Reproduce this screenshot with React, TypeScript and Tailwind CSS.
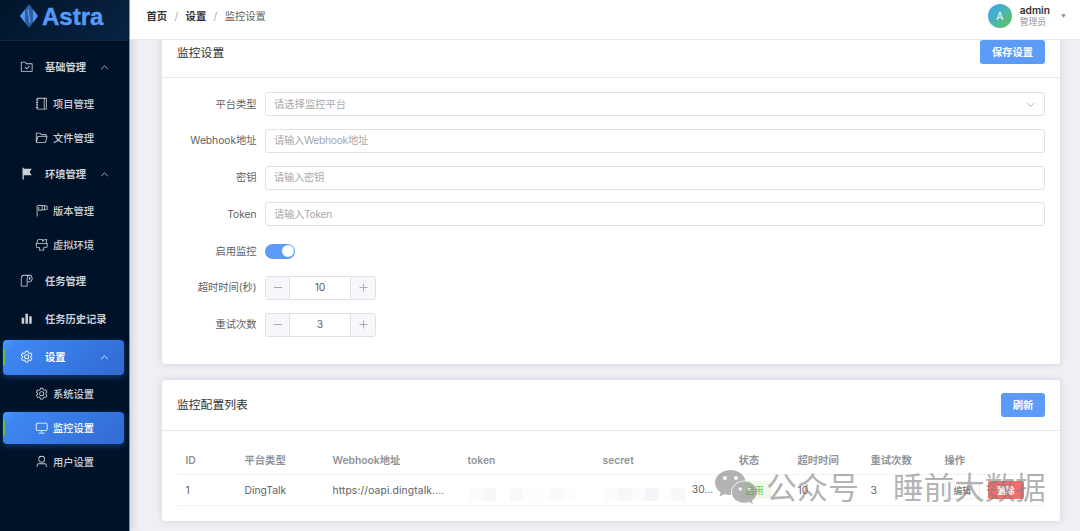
import React from "react";

const icons: Record<string, string> = {
  folderChecked:
    "M128 192v640h768V320H485.76L357.504 192zm-32-64h287.872l128.384 128H928a32 32 0 0 1 32 32v576a32 32 0 0 1-32 32H96a32 32 0 0 1-32-32V160a32 32 0 0 1 32-32m414.08 502.144 180.992-180.992L736.32 494.4 510.08 720.64l-158.4-158.336 45.248-45.312z",
  notebook:
    "M192 128v768h640V128zm-32-64h704a32 32 0 0 1 32 32v832a32 32 0 0 1-32 32H160a32 32 0 0 1-32-32V96a32 32 0 0 1 32-32M672 128h64v768h-64zM96 192h128q32 0 32 32t-32 32H96q-32 0-32-32t32-32m0 192h128q32 0 32 32t-32 32H96q-32 0-32-32t32-32m0 192h128q32 0 32 32t-32 32H96q-32 0-32-32t32-32m0 192h128q32 0 32 32t-32 32H96q-32 0-32-32t32-32",
  folderOpened:
    "M878.08 448H241.92l-96 384h636.16zM832 384v-64H485.76L357.504 192H128v448l57.92-231.744A32 32 0 0 1 216.96 384zm-24.96 512H96a32 32 0 0 1-32-32V160a32 32 0 0 1 32-32h287.872l128.384 128H864a32 32 0 0 1 32 32v96h23.04a32 32 0 0 1 31.04 39.744l-112 448A32 32 0 0 1 807.04 896",
  flag: "M288 128h608L736 384l160 256H288v320h-96V64h96z",
  wind: "M160 64q32 0 32 32v832q0 32-32 32t-32-32V96q0-32 32-32m416 354.624 128-11.584V168.96l-128-11.52zm-64 5.824V151.552L320 134.08V160h-64V64l616.704 56.064A96 96 0 0 1 960 215.68v144.64a96 96 0 0 1-87.296 95.616L256 512V224h64v217.92zm256-23.232 98.88-8.96A32 32 0 0 0 896 360.32V215.68a32 32 0 0 0-29.12-31.872l-98.88-8.96z",
  brush:
    "M896 448H128v192a64 64 0 0 0 64 64h192v192h256V704h192a64 64 0 0 0 64-64zm-770.752-64c0-47.552 5.248-90.24 15.552-128 14.72-54.016 42.496-107.392 83.2-160h417.28l-15.36 70.336L736 96h211.2c-24.832 42.88-41.92 96.256-51.2 160a663.872 663.872 0 0 0-6.144 128H960v256a128 128 0 0 1-128 128H704v160a32 32 0 0 1-32 32H352a32 32 0 0 1-32-32V768H192A128 128 0 0 1 64 640V384zm64 0h636.544c-2.048-45.824.256-91.584 6.848-137.216 4.48-30.848 10.688-59.776 18.688-86.784h-96.64l-221.12 141.248L561.92 160H256.512c-25.856 37.888-43.776 75.456-53.952 112.832-8.768 32.064-13.248 69.12-13.312 111.168z",
  paper:
    "M595.2 128H320a192 192 0 0 0-192 192v576h384V352c0-90.496 32.448-171.2 83.2-224M736 64c123.712 0 224 128.96 224 288S859.712 640 736 640H576v320H64V320A256 256 0 0 1 320 64zM576 352v224h160c84.352 0 160-97.28 160-224s-75.648-224-160-224-160 97.28-160 224M736 448c-35.328 0-64-43.008-64-96s28.672-96 64-96 64 43.008 64 96-28.672 96-64 96",
  histogram: "M416 896V128h192v768zm-288 0V448h192v448zm576 0V320h192v576z",
  setting:
    "M600.704 64a32 32 0 0 1 30.464 22.208l35.2 109.376c14.784 7.232 28.928 15.36 42.432 24.512l112.384-24.192a32 32 0 0 1 34.432 15.36L944.32 364.8a32 32 0 0 1-4.032 37.504l-77.12 85.12a357.12 357.12 0 0 1 0 49.024l77.12 85.248a32 32 0 0 1 4.032 37.504l-88.704 153.6a32 32 0 0 1-34.432 15.296L708.8 803.904c-13.44 9.088-27.648 17.28-42.368 24.512l-35.264 109.376A32 32 0 0 1 600.704 960H423.296a32 32 0 0 1-30.464-22.208L357.696 828.48a351.616 351.616 0 0 1-42.56-24.64l-112.32 24.256a32 32 0 0 1-34.432-15.36L79.68 659.2a32 32 0 0 1 4.032-37.504l77.12-85.248a357.12 357.12 0 0 1 0-48.896l-77.12-85.248A32 32 0 0 1 79.68 364.8l88.704-153.6a32 32 0 0 1 34.432-15.296l112.32 24.256c13.568-9.152 27.776-17.408 42.56-24.64l35.2-109.312A32 32 0 0 1 423.232 64H600.64zm-23.424 64H446.72l-36.352 113.088-24.512 11.968a294.113 294.113 0 0 0-34.816 20.096l-22.656 15.36-116.224-25.088-65.28 113.152 79.68 88.192-1.92 27.136a293.12 293.12 0 0 0 0 40.192l1.92 27.136-79.808 88.192 65.344 113.152 116.224-25.024 22.656 15.296a294.113 294.113 0 0 0 34.816 20.096l24.512 11.968L446.72 896h130.688l36.48-113.152 24.448-11.904a288.282 288.282 0 0 0 34.752-20.096l22.592-15.296 116.288 25.024 65.28-113.152-79.744-88.192 1.92-27.136a293.12 293.12 0 0 0 0-40.256l-1.92-27.136 79.808-88.128-65.344-113.152-116.288 24.96-22.592-15.232a287.616 287.616 0 0 0-34.752-20.096l-24.448-11.904L577.344 128zM512 320a192 192 0 1 1 0 384 192 192 0 0 1 0-384m0 64a128 128 0 1 0 0 256 128 128 0 0 0 0-256",
  monitor:
    "M544 768v128h192a32 32 0 1 1 0 64H288a32 32 0 1 1 0-64h192V768H192A128 128 0 0 1 64 640V256a128 128 0 0 1 128-128h640a128 128 0 0 1 128 128v384a128 128 0 0 1-128 128zM192 192a64 64 0 0 0-64 64v384a64 64 0 0 0 64 64h640a64 64 0 0 0 64-64V256a64 64 0 0 0-64-64z",
  user: "M512 512a192 192 0 1 0 0-384 192 192 0 0 0 0 384m0 64a256 256 0 1 1 0-512 256 256 0 0 1 0 512m320 320v-96a96 96 0 0 0-96-96H288a96 96 0 0 0-96 96v96a32 32 0 1 1-64 0v-96a160 160 0 0 1 160-160h448a160 160 0 0 1 160 160v96a32 32 0 1 1-64 0",
};

function Icon({ name }: { name: string }) {
  return (
    <svg viewBox="0 0 1024 1024" className="size-[13.4px] shrink-0 fill-current">
      <path d={icons[name]} />
    </svg>
  );
}

function Chevron({ up = false, className = "" }: { up?: boolean; className?: string }) {
  return (
    <svg viewBox="0 0 10 10" className={`size-[9px] shrink-0 fill-none stroke-current ${className}`} strokeWidth="0.9">
      <path d={up ? "M1.3 6.8 5 3.2l3.7 3.6" : "M1 3.2 5 7.2l4-4"} />
    </svg>
  );
}

type Item = { label: string; icon: string; sub?: boolean; open?: boolean; active?: boolean; box: string };

const items: Item[] = [
  { label: "基础管理", icon: "folderChecked", open: true, box: "h-[35px] mt-[9px]" },
  { label: "项目管理", icon: "notebook", sub: true, box: "h-[32px] mt-[3px]" },
  { label: "文件管理", icon: "folderOpened", sub: true, box: "h-[32px] mt-[2px]" },
  { label: "环境管理", icon: "flag", open: true, box: "h-[35px] mt-[3px]" },
  { label: "版本管理", icon: "wind", sub: true, box: "h-[32px] mt-[3px]" },
  { label: "虚拟环境", icon: "brush", sub: true, box: "h-[32px] mt-[2px]" },
  { label: "任务管理", icon: "paper", box: "h-[35px] mt-[3px]" },
  { label: "任务历史记录", icon: "histogram", box: "h-[35px] mt-[3px]" },
  { label: "设置", icon: "setting", open: true, active: true, box: "h-[35px] mt-[3px]" },
  { label: "系统设置", icon: "setting", sub: true, box: "h-[32px] mt-[3px]" },
  { label: "监控设置", icon: "monitor", sub: true, active: true, box: "h-[32px] mt-[2px]" },
  { label: "用户设置", icon: "user", sub: true, box: "h-[32px] mt-[2px]" },
];

function MenuItem({ item }: { item: Item }) {
  return (
    <div
      className={`relative ml-[3px] flex w-[120.5px] shrink-0 items-center rounded-[4px] ${item.box} ${
        item.sub ? "gap-[5px] pl-[31.5px] pt-[1px] font-medium" : "gap-[11.5px] pl-[17px] font-bold"
      } ${
        item.active
          ? "bg-linear-135 from-[#409eff] from-0% via-[#3f87f3] via-10% to-[#316ad2] text-white shadow-[0_2px_6px_rgba(64,138,255,0.35)]"
          : "text-[#cbd0d7]"
      }`}
    >
      {item.active && <span className="absolute left-0 h-[16px] w-[2px] rounded-r-[1px] bg-[#67c23a]" />}
      <Icon name={item.icon} />
      <span>{item.label}</span>
      {item.open && <Chevron up className="ml-auto mr-[15px]" />}
    </div>
  );
}

function Row({ label, children }: { label: string; children: React.ReactNode }) {
  return (
    <div className="mb-[12.8px] flex h-[24px] items-center">
      <div className="w-[79.5px] shrink-0 whitespace-nowrap text-right tracking-[-0.05px]">{label}</div>
      <div className="ml-[8.5px] flex flex-1 items-center">{children}</div>
    </div>
  );
}

function Input({ placeholder, select = false }: { placeholder: string; select?: boolean }) {
  return (
    <div className="flex h-[24px] flex-1 items-center justify-between rounded-[3px] border border-[#dfe1e7] pl-[8px] pr-[9px] text-[#a5a8af]">
      <span className={select ? "" : "tracking-[-0.3px]"}>{placeholder}</span>
      {select && <Chevron />}
    </div>
  );
}

function Stepper({ value }: { value: number }) {
  return (
    <div className="flex h-[24px] w-[111px] items-stretch overflow-hidden rounded-[3px] border border-[#dfe1e7]">
      <div className="flex w-[24px] items-center justify-center border-r border-[#dfe1e7] bg-[#f5f7fa]">
        <span className="h-px w-[8px] bg-[#a3a6ad]" />
      </div>
      <div className="flex flex-1 items-center justify-center">{value}</div>
      <div className="flex w-[25px] items-center justify-center border-l border-[#dfe1e7] bg-[#f5f7fa]">
        <svg viewBox="0 0 9 9" className="size-[9px] stroke-[#a3a6ad]" strokeWidth="0.9">
          <path d="M4.5.5v8M.5 4.5h8" />
        </svg>
      </div>
    </div>
  );
}

const mosaics = [
  ["#fbfbfc", "#f7f7fa", "#ffffff", "#f9f9fc", "#fefefe", "#fefefe", "#fafafd", "#fdfdfe"],
  ["#fbfbfd", "#f7f7f8", "#fbfbfd", "#f5f5f9", "#fdfdfe", "#f8f8fa"],
];

function Mosaic({ colors }: { colors: string[] }) {
  return (
    <div className="ml-[2px] mt-[9px] flex">
      {colors.map((c, i) => (
        <span key={i} className="h-[13.4px] w-[13.4px]" style={{ background: c }} />
      ))}
    </div>
  );
}

const grid = "grid grid-cols-[59px_88px_135px_135px_136px_59px_73px_74px_110px] items-center pl-[8.5px]";

export default function App() {
  return (
    <div className="relative flex h-[531px] w-[1080px] overflow-hidden bg-[#eff0f5] font-['Inter','Noto_Sans_CJK_SC',sans-serif] text-[10.3px] leading-[15px] text-[#606266]">
      <aside className="flex w-[129.5px] shrink-0 flex-col border-r border-[#8590a0] bg-[#001227] shadow-[2px_0_8px_rgba(0,21,41,0.15)]">
        <div className="flex h-[40.5px] shrink-0 items-center border-b border-[#12283c] bg-linear-135 from-[#001529] to-[#0a2344] pb-[8px] pl-[20px]">
          <svg viewBox="0 0 18 24" className="h-[24px] w-[18px]">
            <path d="M9 0 18 12 9 24 0 12z" fill="#2d5b9d" />
            <path d="M5 5.5v13L0 12zM13 5.5v13L18 12z" fill="#4f96f8" />
            <path d="m8 5 2 14" stroke="#5b9efa" strokeWidth="1.3" />
          </svg>
          <span className="ml-[4px] mt-[2px] font-['Liberation_Sans',sans-serif] text-[24px] font-bold leading-[28px] text-[#569bfb] [-webkit-text-stroke:0.4px_#569bfb]">Astra</span>
        </div>
        <nav className="flex flex-col">
          {items.map((item) => (
            <MenuItem key={item.label} item={item} />
          ))}
        </nav>
      </aside>

      <div className="flex min-w-0 flex-1 flex-col">
        <header className="z-10 flex h-[40px] shrink-0 items-start justify-between border-b border-[#e6e8ec] bg-white pl-[17px] pr-[14px]">
          <div className="flex pt-[9px]">
            <b className="text-[#303133]">首页</b>
            <span className="mx-[7.4px] text-[#a8abb2]">/</span>
            <b className="text-[#303133]">设置</b>
            <span className="mx-[7.4px] text-[#a8abb2]">/</span>
            <span>监控设置</span>
          </div>
          <div className="flex pt-[4px]">
            <div className="flex size-[24px] items-center justify-center rounded-full bg-linear-135 from-[#409eff] to-[#67c23a] text-white">A</div>
            <div className="ml-[8px] flex flex-col">
              <span className="h-[12px] text-[10.2px] font-semibold leading-[13px] text-[#303133]">admin</span>
              <span className="text-[8.8px] leading-[11px] text-[#909399]">管理员</span>
            </div>
            <svg viewBox="0 0 6 4" className="ml-[11px] mt-[10px] h-[4px] w-[5px] fill-[#909399]">
              <path d="M0 0h6L3 4z" />
            </svg>
          </div>
        </header>

        <main className="flex flex-1 flex-col pl-[32.5px] pr-[20px]">
          <section className="-mt-[14px] h-[338px] shrink-0 rounded-[3px] bg-white shadow-[0_0_9px_rgba(0,0,0,0.12)]">
            <div className="flex h-[52px] items-end justify-between border-b border-[#e6e8ed] px-[15px] pb-[13px]">
              <span className="pb-[3px] text-[11.8px] text-[#303133]">监控设置</span>
              <button className="h-[24px] w-[65px] rounded-[3px] bg-[#5c9cf8] font-bold text-white">保存设置</button>
            </div>
            <div className="pl-[15px] pr-[15px] pt-[14px]">
              <Row label="平台类型"><Input placeholder="请选择监控平台" select /></Row>
              <Row label="Webhook地址"><Input placeholder="请输入Webhook地址" /></Row>
              <Row label="密钥"><Input placeholder="请输入密钥" /></Row>
              <Row label="Token"><Input placeholder="请输入Token" /></Row>
              <Row label="启用监控">
                <div className="flex h-[15px] w-[30px] items-center justify-end rounded-full bg-[#5c9cf8] pr-[1.5px]">
                  <span className="size-[12px] rounded-full bg-white" />
                </div>
              </Row>
              <Row label="超时时间(秒)"><Stepper value={10} /></Row>
              <Row label="重试次数"><Stepper value={3} /></Row>
            </div>
          </section>

          <section className="mt-[16px] h-[141px] shrink-0 rounded-[3px] bg-white shadow-[0_0_9px_rgba(0,0,0,0.12)]">
            <div className="flex h-[51px] items-center justify-between border-b border-[#e6e8ed] px-[15px]">
              <span className="pt-[1px] text-[11.8px] text-[#303133]">监控配置列表</span>
              <button className="h-[24px] w-[44px] rounded-[3px] bg-[#5c9cf8] font-bold text-white">刷新</button>
            </div>
            <div className="mx-[15px] pt-[15px]">
              <div className={`${grid} h-[29px] border-b border-[#eff1f5] font-semibold text-[#909399]`}>
                <span>ID</span>
                <span>平台类型</span>
                <span>Webhook地址</span>
                <span>token</span>
                <span>secret</span>
                <span>状态</span>
                <span>超时时间</span>
                <span>重试次数</span>
                <span>操作</span>
              </div>
              <div className={`${grid} h-[31px] border-b border-[#eff1f5]`}>
                <span>1</span>
                <span>DingTalk</span>
                <span className="tracking-[0.12px]">https://oapi.dingtalk.…</span>
                <Mosaic colors={mosaics[0]} />
                <div className="flex items-center">
                  <Mosaic colors={mosaics[1]} />
                  <span className="ml-[7px]">30...</span>
                </div>
                <span className="flex h-[18px] w-[32px] items-center justify-center rounded-[3px] bg-[#f0f9eb] text-[9px] text-[#67c23a]">启用</span>
                <span>10</span>
                <span>3</span>
                <span className="flex gap-[8px] text-[8.8px]">
                  <span className="flex h-[18px] w-[35.5px] items-center justify-center rounded-[2px] border border-[#eceef2]">编辑</span>
                  <span className="flex h-[18px] w-[35.5px] items-center justify-center rounded-[2px] bg-[#f56c6c] font-bold text-white">删除</span>
                </span>
              </div>
            </div>
          </section>
        </main>
      </div>

      <div className="absolute left-[715px] top-[466px] z-20 flex items-center text-[#808080]/60">
        <svg viewBox="0 0 42 36" className="h-[36px] w-[42px] fill-current">
          <path
            fillRule="evenodd"
            d="M15.500 2C7 2 0 7.600 0 14.800c0 4 2.300 7.300 5.700 9.600L4.300 28.700l5-2.600c2.300.7 4.300.9 6.900.8C14.500 19 21 12.500 30.500 12.500 29 6.200 23 2 15.500 2M10 8a2 2 0 1 1 0 4 2 2 0 0 1 0-4m11 0a2 2 0 1 1 0 4 2 2 0 0 1 0-4M29.500 13.600c-7 0-12.700 4.700-12.700 10.600s5.700 10.600 12.700 10.600c1.700 0 3.200-.3 4.700-.7l3.900 2-1.200-3.400c3.100-2 4.900-5.100 4.900-8.500 0-5.900-5.300-10.600-12.300-10.600m-4.200 5.700a1.700 1.700 0 1 1 0 3.400 1.700 1.700 0 0 1 0-3.400m8.500 0a1.700 1.700 0 1 1 0 3.400 1.700 1.700 0 0 1 0-3.400"
          />
        </svg>
        <span className="ml-[9px] whitespace-nowrap font-['Noto_Sans_CJK_SC',sans-serif] text-[31px] font-normal leading-[40px]">公众号</span>
        <span className="ml-[34px] whitespace-nowrap font-['Noto_Sans_CJK_SC',sans-serif] text-[30.6px] font-normal leading-[40px]">睡前大数据</span>
      </div>
    </div>
  );
}
